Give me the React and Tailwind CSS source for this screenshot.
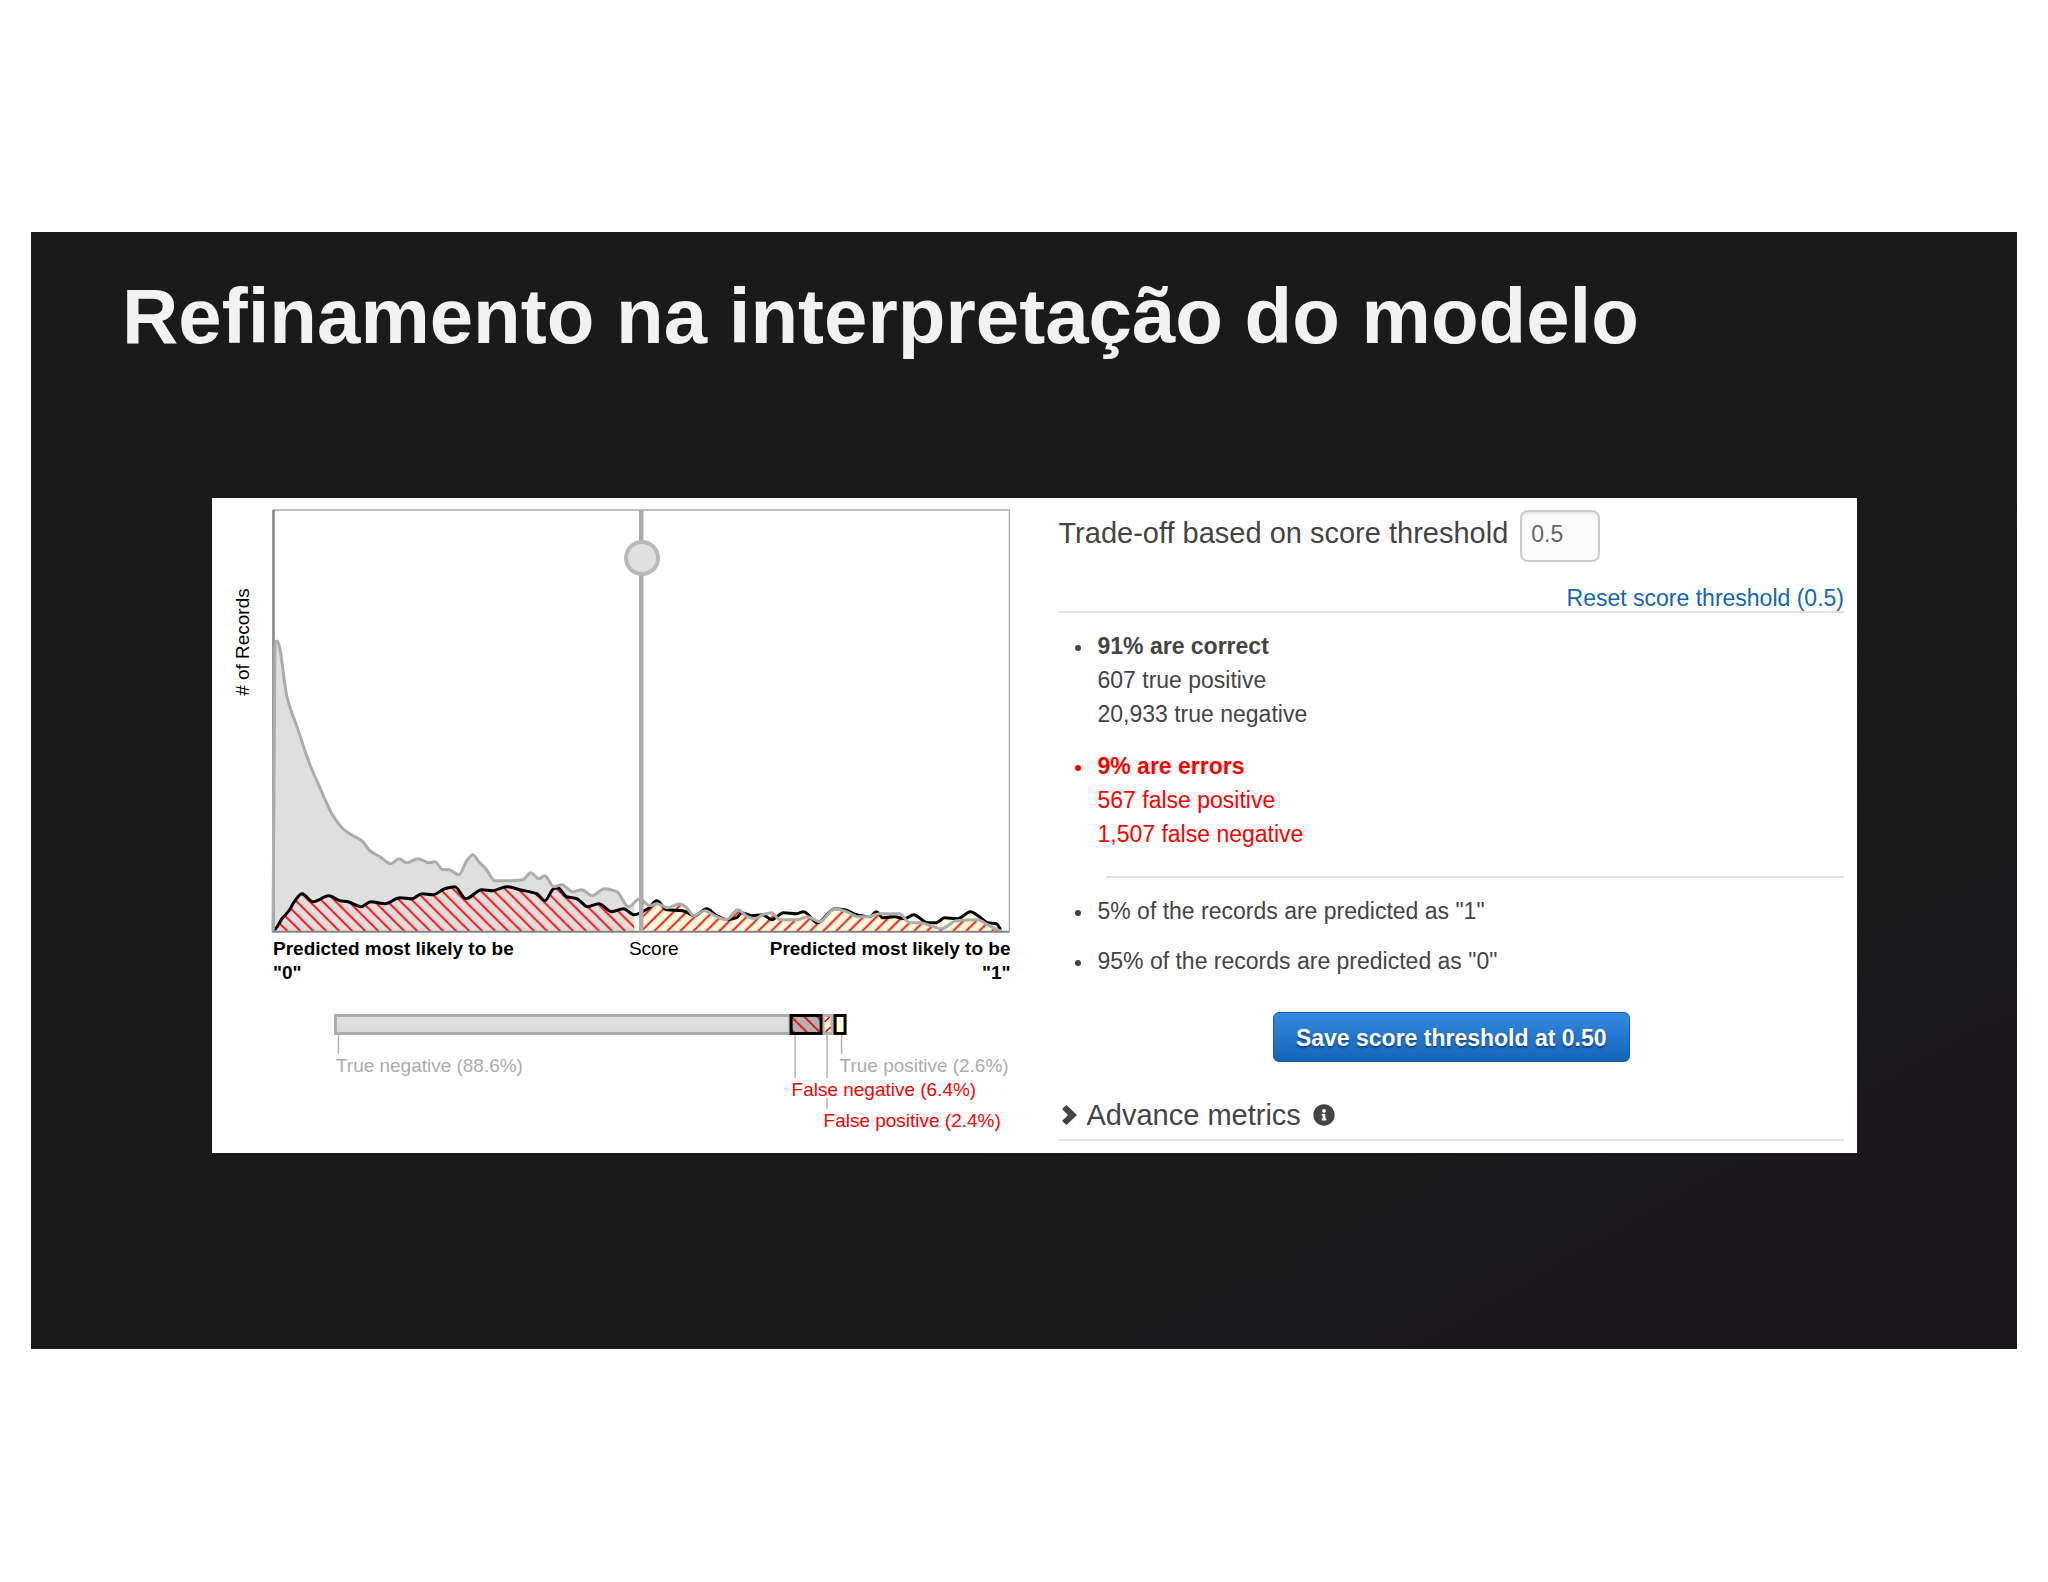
import { useState } from 'react'
import { FaInfoCircle } from 'react-icons/fa'

const NEGATIVE = [
  [61, 434], [63, 145], [65, 143], [67, 147], [75, 199], [85, 229], [98, 267], [108, 290],
  [120, 316], [131, 331], [141, 338], [150, 343], [158, 353], [168, 359], [179, 366], [187, 361],
  [195, 365], [206, 361], [217, 365], [223, 364], [231, 372], [237, 372], [247, 377], [255, 363],
  [261, 357], [267, 364], [274, 371], [283, 383], [300, 383], [311, 382], [319, 375], [327, 381],
  [333, 378], [342, 389], [350, 387], [361, 394], [370, 392], [380, 398], [393, 391], [405, 394],
  [417, 409], [428, 401], [438, 408], [445, 406], [456, 410], [468, 406], [475, 410], [482, 418],
  [493, 413], [505, 419], [515, 422], [526, 412], [536, 419], [543, 421], [551, 417], [560, 415],
  [568, 422], [586, 422], [596, 419], [608, 424], [623, 411], [635, 414], [646, 419], [656, 419],
  [668, 416], [688, 416], [698, 425], [708, 425], [730, 431], [745, 423], [766, 422], [778, 428],
  [790, 433],
]

const POSITIVE = [
  [62, 432], [70, 421], [77, 413], [83, 403], [90, 396], [101, 404], [117, 398], [128, 403],
  [136, 404], [149, 409], [159, 404], [173, 406], [188, 400], [200, 401], [210, 396], [221, 397],
  [233, 391], [243, 389], [254, 401], [270, 392], [281, 393], [295, 389], [308, 392], [325, 396],
  [333, 403], [342, 391], [346, 390], [355, 399], [365, 401], [376, 409], [387, 406], [400, 414],
  [412, 411], [422, 417], [436, 411], [445, 403], [455, 412], [471, 413], [483, 418], [495, 411],
  [505, 418], [516, 422], [525, 420], [530, 415], [540, 418], [551, 417], [560, 422], [572, 415],
  [585, 416], [592, 414], [606, 425], [623, 411], [633, 412], [645, 417], [658, 419], [665, 414],
  [671, 420], [683, 419], [693, 421], [702, 417], [716, 425], [725, 425], [733, 420], [746, 421],
  [759, 414], [768, 419], [776, 425], [785, 426], [790, 432],
]

// monotone cubic: flat on peaks and valleys, so the curve never overshoots
function smooth(points) {
  const slope = points.map((p, i) => {
    const a = points[i - 1]
    const b = points[i + 1]
    if (!a || !b) return 0
    const s0 = (p[1] - a[1]) / (p[0] - a[0])
    const s1 = (b[1] - p[1]) / (b[0] - p[0])
    return s0 * s1 <= 0 ? 0 : (2 * s0 * s1) / (s0 + s1)
  })
  let d = `M${points[0][0]} ${points[0][1]}`
  for (let i = 1; i < points.length; i++) {
    const [x0, y0] = points[i - 1]
    const [x1, y1] = points[i]
    const h = (x1 - x0) / 3
    d += `C${x0 + h} ${y0 + slope[i - 1] * h} ${x1 - h} ${y1 - slope[i] * h} ${x1} ${y1}`
  }
  return d
}

const negativeLine = smooth(NEGATIVE)
const positiveLine = smooth(POSITIVE)
const negativeArea = `${negativeLine}V434H61Z`
const positiveArea = `${positiveLine}V434H62Z`

function ScoreChart({ threshold }) {
  const x = 61 + threshold * 737
  return (
    <svg viewBox="0 0 799 436" className="block w-full" role="img" aria-label="Score distribution">
      <defs>
        <pattern id="hatchDown" width="13" height="13" patternUnits="userSpaceOnUse" patternTransform="translate(6 0)">
          <path d="M-2 -2L15 15M-2 11L2 15M11 -2L15 2" stroke="#f00" strokeWidth="1.8" />
        </pattern>
        <pattern id="hatchUp" width="13" height="13" patternUnits="userSpaceOnUse" patternTransform="translate(5 0)">
          <path d="M-2 15L15 -2M-2 2L2 -2M11 15L15 11" stroke="#f00" strokeWidth="1.8" />
        </pattern>
        <clipPath id="below"><rect x="0" y="0" width={Math.max(0, x - 7)} height="436" /></clipPath>
        <clipPath id="above"><rect x={x} y="0" width={Math.max(0, 799 - x)} height="436" /></clipPath>
      </defs>
      <g clipPath="url(#below)">
        <path d={negativeArea} fill="#dfdfdf" />
        <path d={positiveArea} fill="#e2dcdf" />
        <path d={positiveArea} fill="url(#hatchDown)" />
      </g>
      <g clipPath="url(#above)">
        <path d={positiveArea} fill="#fffbdc" />
        <path d={negativeArea} fill="#fffbdc" />
        <path d={negativeArea} fill="url(#hatchUp)" />
      </g>
      <path d={positiveLine} fill="none" stroke="#000" strokeWidth="3" />
      <path d="M61 12H798V434" fill="none" stroke="#aaa" strokeWidth="1.5" />
      <path d="M61.5 12V434" stroke="#868686" strokeWidth="2.6" />
      <path d={negativeLine} fill="none" stroke="#acacac" strokeWidth="3" />
      <path d="M60 434H798" stroke="#868686" strokeWidth="2" />
      <path d={`M${x} 12V434`} stroke="#acacac" strokeWidth="4.5" />
      <text
        transform="translate(37 198) rotate(-90)"
        className="fill-black text-[19px]"
      >
        # of Records
      </text>
    </svg>
  )
}

function OutcomeBar() {
  return (
    <svg viewBox="0 0 799 154" className="block w-full overflow-visible">
      <defs>
        <pattern id="barDown" width="13" height="13" patternUnits="userSpaceOnUse" patternTransform="translate(8 6)">
          <path d="M-2 -2L15 15M-2 11L2 15M11 -2L15 2" stroke="#e00" strokeWidth="1.8" />
        </pattern>
        <linearGradient id="barFill" x1="0" y1="0" x2="0" y2="1">
          <stop offset="0" stopColor="#e2e2e2" />
          <stop offset="1" stopColor="#d9d9d9" />
        </linearGradient>
      </defs>
      <rect x="123.5" y="30.5" width="455" height="18" fill="url(#barFill)" stroke="#acacac" strokeWidth="3" />
      <rect x="611" y="29" width="12" height="21" fill="#b5b1b1" />
      <rect x="613" y="32" width="6" height="15" fill="#fdf3d0" />
      <path d="M613 37L618 32M614 47L619 42" stroke="#e00" strokeWidth="1.6" />
      <rect x="579.5" y="30.5" width="30" height="18" fill="#b5b1b1" />
      <rect x="579.5" y="30.5" width="30" height="18" fill="url(#barDown)" stroke="#000" strokeWidth="3" />
      <rect x="623.5" y="30.5" width="10" height="18" fill="#fdfbdf" stroke="#000" strokeWidth="3" />
      <path d="M126.5 50V69M583.5 50V93M615.5 50V93M615.5 113V124M630 50V69" stroke="#b4b4b4" strokeWidth="1.5" />
      <g className="text-[19px]">
        <text x="124" y="87" fill="#acacac">True negative (88.6%)</text>
        <text x="628" y="87" fill="#acacac">True positive (2.6%)</text>
        <text x="580" y="111" fill="#f00">False negative (6.4%)</text>
        <text x="612" y="142" fill="#f00">False positive (2.4%)</text>
      </g>
    </svg>
  )
}

function Item({ className = '', children }) {
  return (
    <li className={`flex gap-4 ${className}`}>
      <span className="mt-4 size-1.5 rounded-full bg-current" />
      <div>{children}</div>
    </li>
  )
}

export default function App() {
  const [threshold, setThreshold] = useState('0.5')
  const value = Math.min(1, Math.max(0, Number(threshold) || 0))

  return (
    <div className="min-h-screen bg-white px-[31px] pt-[232px] pb-12 font-['Liberation_Sans',Arial,sans-serif]">
      <main className="aspect-video bg-linear-to-br from-[#1a1a1a] from-60% to-[#1a171b] pt-[45px]">
        <h1 className="pl-[91px] text-[78px] leading-none font-bold text-[#f2f2f2]">
          Refinamento na interpretação do modelo
        </h1>

        <section className="mt-[143px] mr-40 ml-[181px] grid grid-cols-[799fr_786fr] items-start gap-12 bg-white pr-[13px]">
          {/* Distribution */}
          <div>
            <div className="relative">
              <ScoreChart threshold={value} />
              <input
                type="range"
                min="0"
                max="1"
                step="0.01"
                value={value}
                onChange={(e) => setThreshold(e.target.value)}
                aria-label="Score threshold"
                className="absolute top-[42px] right-0 left-[61px] h-9 appearance-none bg-transparent [&::-webkit-slider-thumb]:size-9 [&::-webkit-slider-thumb]:appearance-none [&::-webkit-slider-thumb]:rounded-full [&::-webkit-slider-thumb]:border-4 [&::-webkit-slider-thumb]:border-[#b9b9b9] [&::-webkit-slider-thumb]:bg-[#e0e0e0]"
              />
            </div>
            <div className="mt-[3px] flex justify-between pl-[61px] text-[19px] leading-6 text-black">
              <p className="flex-1 font-bold">Predicted most likely to be<br />"0"</p>
              <p className="pl-6">Score</p>
              <p className="flex-1 text-right font-bold">Predicted most likely to be<br />"1"</p>
            </div>
            <OutcomeBar />
          </div>

          {/* Threshold summary */}
          <div className="pt-3 text-[23px] leading-[34px] text-[#444]">
            <div className="flex items-start gap-3">
              <label htmlFor="threshold" className="text-[29px] leading-[46px]">
                Trade-off based on score threshold
              </label>
              <input
                id="threshold"
                type="text"
                value={threshold}
                onChange={(e) => setThreshold(e.target.value)}
                className="h-[52px] w-20 rounded-lg border-2 border-[#ccc] bg-[#fbfbfb] pr-2 pb-1 pl-[9px] text-[#666] shadow-[inset_0_2px_2px_rgba(0,0,0,0.08)]"
              />
            </div>

            <div className="mt-[23px] border-b-2 border-[#e2e2e2] text-right leading-[26px]">
              <a href="#reset" onClick={() => setThreshold('0.5')} className="text-[#1166bb]">
                Reset score threshold (0.5)
              </a>
            </div>

            <ul className="mt-4 space-y-[18px] pl-[17px]">
              <Item>
                <b>91% are correct</b>
                <p>607 true positive</p>
                <p>20,933 true negative</p>
              </Item>
              <Item className="text-[#f00]">
                <b>9% are errors</b>
                <p>567 false positive</p>
                <p>1,507 false negative</p>
              </Item>
            </ul>

            <hr className="mt-[25px] ml-12 border-t-2 border-[#e2e2e2]" />

            <ul className="mt-4 space-y-4 pl-[17px]">
              <Item>5% of the records are predicted as "1"</Item>
              <Item>95% of the records are predicted as "0"</Item>
            </ul>

            <div className="mt-[34px] flex justify-center">
              <button
                type="button"
                className="h-[50px] rounded-md border border-[#1259a8] bg-linear-to-b from-[#338ae0] to-[#1464bb] px-[22px] pt-0.5 font-bold text-white [text-shadow:0_2px_2px_rgba(0,0,0,0.4)]"
              >
                Save score threshold at 0.50
              </button>
            </div>

            <div className="mt-9 mb-3 border-b-2 border-[#e2e2e2] pb-[7px]">
              <button type="button" className="flex items-center gap-2 pl-1 text-[29px]">
                <svg viewBox="0 0 16 20" className="h-5 w-4" fill="currentColor" aria-hidden="true">
                  <path d="M4.5 0L15 10L4.5 20L0 16L6 10L0 4Z" />
                </svg>
                Advance metrics
                <FaInfoCircle className="ml-1 size-[22px]" />
              </button>
            </div>
          </div>
        </section>
      </main>
    </div>
  )
}
